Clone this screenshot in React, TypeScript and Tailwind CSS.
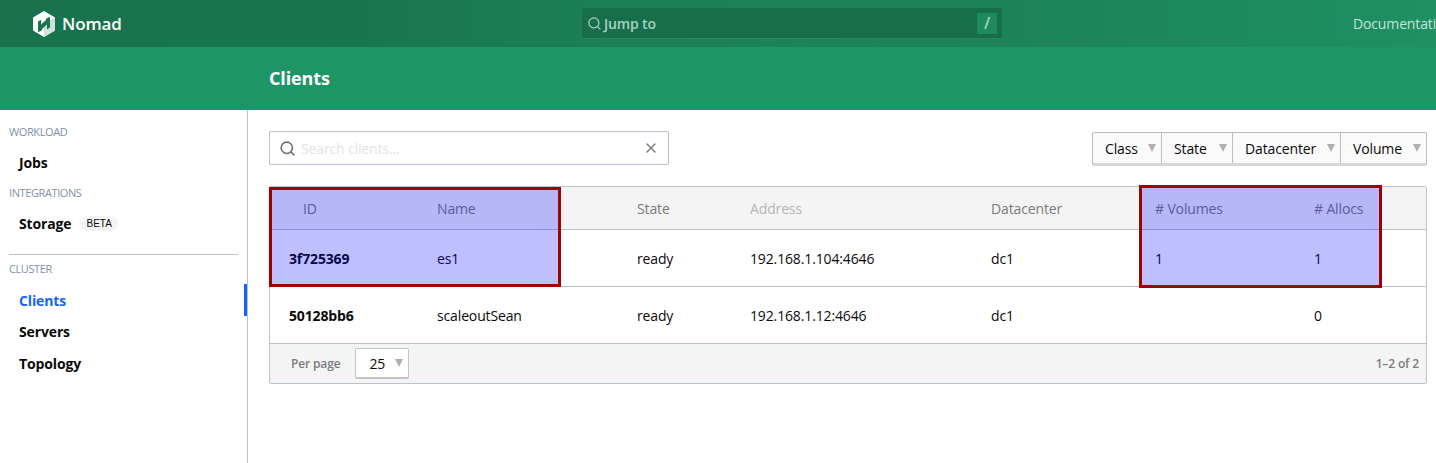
import { Search, X } from "lucide-react";

const font = "font-['Open_Sans','Noto_Sans',sans-serif]";

function Caret() {
  return (
    <span className="h-0 w-0 shrink-0 border-x-[4px] border-t-[8px] border-x-transparent border-t-[#b0b0b0]" />
  );
}

function NomadLogo() {
  return (
    <svg viewBox="0 0 24 26" className="h-[26px] w-6">
      <path d="M12 0 23 6.500V19.500L12 26 1 19.500V6.500Z" fill="#ffffff" />
      <path d="M12 13 23 6.500V19.500L12 26Z" fill="#cfe3da" />
      <path
        d="M6 10.500 9 8.800V13.500L14 9V7.800L18 5.800V16.500L15 18.200V13.500L10 18V19.300L6 21.300Z"
        fill="#19754f"
      />
    </svg>
  );
}

function SideLabel({ children }: { children: string }) {
  return (
    <div className="pl-[9px] text-[11px] leading-[14px] tracking-[-0.4px] text-[#8090ad]">{children}</div>
  );
}

function SideLink({ children, active }: { children: string; active?: boolean }) {
  return (
    <div
      className={`flex h-8 items-center pl-[19px] text-[14px] font-bold ${active ? "text-[#1563ff]" : "text-[#0a0a0a]"}`}
    >
      {children}
    </div>
  );
}

const filters = [
  { label: "Class", width: "w-[68px]" },
  { label: "State", width: "w-[71px]" },
  { label: "Datacenter", width: "w-[108px]" },
  { label: "Volume", width: "w-[86px]" },
];

const rows = [
  { id: "3f725369", name: "es1", state: "ready", address: "192.168.1.104:4646", dc: "dc1", volumes: "1", allocs: "1" },
  { id: "50128bb6", name: "scaleoutSean", state: "ready", address: "192.168.1.12:4646", dc: "dc1", volumes: "", allocs: "0" },
];

const cols = "grid grid-cols-[167px_200px_113px_241px_164px_159px_1fr] items-center";

export default function App() {
  return (
    <div
      className={`relative h-[463px] w-[1436px] overflow-hidden bg-white text-[14px] tracking-[-0.14px] text-[#0a0a0a] ${font}`}
    >
      <header className="flex h-[47px] items-center bg-[linear-gradient(to_right,#18734d_0%,#19754f_25%,#1c7f58_42%,#1d8259_70%,#1f9064_100%)]">
        <div className="flex w-[582px] shrink-0 items-center gap-[6px] pl-[32px]">
          <NomadLogo />
          <span className="text-[17px] font-semibold text-white">Nomad</span>
        </div>
        <div className="flex h-[31px] w-[420px] shrink-0 items-center rounded-[2px] border-b border-b-[#2b8560] bg-[#166e4a] pl-[5px] pr-[5px] text-[#a9d2c0]">
          <Search size={15} strokeWidth={2} />
          <span className="ml-[2px] text-[14px] font-semibold">Jump to</span>
          <span className="ml-auto flex h-[21px] w-5 items-center justify-center bg-[#1f8a60] text-[16px] font-semibold">/</span>
        </div>
        <span className="ml-[351px] whitespace-nowrap text-[14px] text-[#c4e4d6]">Documentation</span>
      </header>
      <div className="flex h-[63px] items-center bg-[#1e9567] pl-[269px] text-[18px] font-bold text-white">Clients</div>
      <div className="flex h-[353px]">
        <aside className="relative w-[248px] shrink-0 border-r border-[#b9c2d0] pt-[15px]">
          <SideLabel>WORKLOAD</SideLabel>
          <div className="mt-[7px]">
            <SideLink>Jobs</SideLink>
          </div>
          <div className="mt-[8px]">
            <SideLabel>INTEGRATIONS</SideLabel>
          </div>
          <div className="mt-[7px] flex h-8 items-center">
            <SideLink>Storage</SideLink>
            <span className="ml-[9px] flex h-[15px] items-center rounded-full bg-[#f4f4f4] px-[6px] font-['Liberation_Sans',sans-serif] text-[10px] tracking-normal">
              BETA
            </span>
          </div>
          <div className="mx-[9px] mt-[15px] border-t border-[#b9c2d0]" />
          <div className="mt-[7px]">
            <SideLabel>CLUSTER</SideLabel>
          </div>
          <div className="mt-[8px]">
            <SideLink active>Clients</SideLink>
            <div className="-mt-px">
              <SideLink>Servers</SideLink>
            </div>
            <SideLink>Topology</SideLink>
          </div>
          <span className="absolute right-0 top-[174px] h-8 w-[3px] bg-[#1563ff]" />
        </aside>
        <main className="flex-1 pl-[21px] pr-[9px] pt-[21px]">
          <div className="flex h-[34px] justify-between">
            <div className="flex h-[34px] w-[400px] items-center rounded-[2px] border border-[#b9c2d0] pl-[9px] pr-[9px]">
              <Search size={17} strokeWidth={2.25} className="text-[#6f6f6f]" />
              <span className="ml-[5px] text-[#dfe3ea]">Search clients...</span>
              <X size={16} strokeWidth={2.25} className="ml-auto text-[#7a7a7a]" />
            </div>
            <div className="mt-px flex h-[34px] rounded-[2px] border border-b-[3px] border-[#bdbdbd] border-b-[#d6d6d6] bg-[#fafafa]">
              {filters.map((filter, i) => (
                <div
                  key={filter.label}
                  className={`flex items-center justify-between pl-3 pr-[5px] ${filter.width} ${i > 0 ? "border-l border-[#bdbdbd]" : ""}`}
                >
                  {filter.label}
                  <Caret />
                </div>
              ))}
            </div>
          </div>
          <div className="mt-[21px] w-[1158px] rounded-[2px] border border-[#b9c2d0]">
            <div className={`${cols} h-[43px] border-b border-[#b9c2d0] bg-[#f4f4f4] text-[#7b7b7b]`}>
              <span className="pl-[33px]">ID</span>
              <span>Name</span>
              <span>State</span>
              <span className="text-[#b5b5b5]">Address</span>
              <span>Datacenter</span>
              <span># Volumes</span>
              <span># Allocs</span>
            </div>
            {rows.map((row) => (
              <div key={row.id} className={`${cols} h-[57px] border-b border-[#b9c2d0]`}>
                <span className="pl-[19px] font-bold">{row.id}</span>
                <span>{row.name}</span>
                <span>{row.state}</span>
                <span>{row.address}</span>
                <span>{row.dc}</span>
                <span>{row.volumes}</span>
                <span>{row.allocs}</span>
              </div>
            ))}
            <div className="flex h-[39px] items-center justify-between bg-[#f4f4f4] pl-[21px] pr-[7px] text-[12px] font-semibold text-[#7b7b7b]">
              <div className="flex items-center">
                <span>Per page</span>
                <div className="ml-[15px] flex h-[31px] w-[54px] items-center justify-between rounded-[2px] border border-b-[2px] border-[#c4c4c4] bg-white pl-[13px] pr-[5px] text-[14px] font-normal text-[#0a0a0a]">
                  25
                  <Caret />
                </div>
              </div>
              <span>1–2 of 2</span>
            </div>
          </div>
        </main>
      </div>
      <div className="absolute left-[269px] top-[187px] h-[100px] w-[292px] border-[3px] border-[#a00000] bg-[#0000ff]/25" />
      <div className="absolute left-[1139px] top-[185px] h-[103px] w-[243px] border-[3px] border-[#a00000] bg-[#0000ff]/25" />
    </div>
  );
}
